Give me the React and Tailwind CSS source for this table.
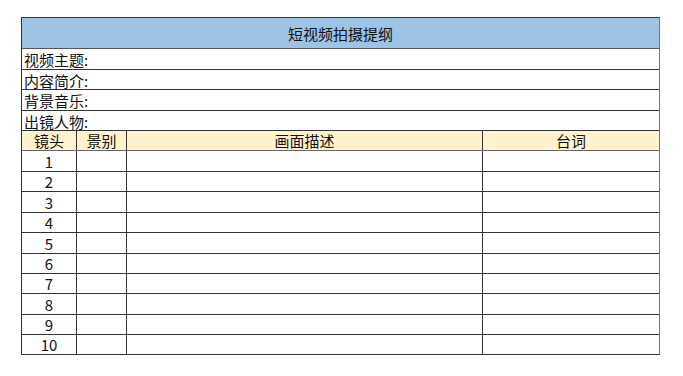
import React from "react";

const font = { fontFamily: '"Noto Sans CJK SC", "Noto Sans", sans-serif' };

const infoRows = [
  { label: "视频主题:", h: "h-[21px]" },
  { label: "内容简介:", h: "h-[20px]" },
  { label: "背景音乐:", h: "h-[21px]" },
  { label: "出镜人物:", h: "h-[20px]" },
];

const dataHeights = [
  "h-[21px]",
  "h-[20px]",
  "h-[21px]",
  "h-[20px]",
  "h-[21px]",
  "h-[20px]",
  "h-[20px]",
  "h-[21px]",
  "h-[20px]",
  "h-[19px]",
];

function Cells({ first, yellow }) {
  return (
    <>
      <div className="w-[55px] shrink-0 border-r border-[#333] flex items-center justify-center">
        {first}
      </div>
      <div className="w-[50px] shrink-0 border-r border-[#333] flex items-center justify-center">
        {yellow ? "景别" : ""}
      </div>
      <div className="w-[356px] shrink-0 border-r border-[#333] flex items-center justify-center">
        {yellow ? "画面描述" : ""}
      </div>
      <div className="flex-1 flex items-center justify-center">
        {yellow ? "台词" : ""}
      </div>
    </>
  );
}

export default function App() {
  return (
    <div className="w-[683px] h-[376px] bg-white pt-[17px] pl-[21px]" style={font}>
      <div className="w-[639px] border border-[#333] border-r-[#777] text-[15px] leading-none text-[#111]">
        <div className="h-[31px] bg-[#9dc3e6] border-b border-[#555] flex items-center justify-center pt-[1px]">
          短视频拍摄提纲
        </div>
        {infoRows.map((r) => (
          <div
            key={r.label}
            className={`${r.h} border-b border-[#333] flex items-center pl-[2px] pt-[1px]`}
          >
            {r.label}
          </div>
        ))}
        <div className="h-[20px] bg-[#fff2cc] border-b border-[#666] flex">
          <Cells first="镜头" yellow />
        </div>
        {dataHeights.map((h, i) => (
          <div
            key={i}
            className={`${h} ${i < 9 ? "border-b border-[#333]" : ""} flex`}
          >
            <Cells first={String(i + 1)} />
          </div>
        ))}
      </div>
    </div>
  );
}
